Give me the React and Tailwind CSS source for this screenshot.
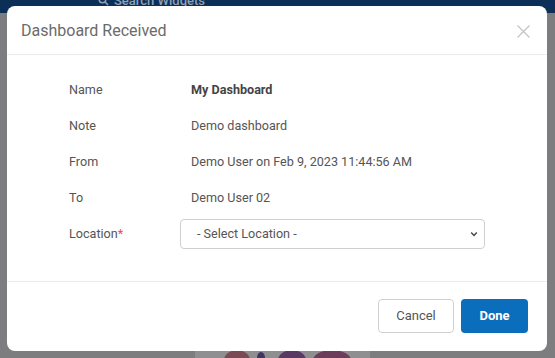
import React from "react";

export default function App() {
  const rows = [
    ["Name", "My Dashboard", true],
    ["Note", "Demo dashboard", false],
    ["From", "Demo User on Feb 9, 2023 11:44:56 AM", false],
    ["To", "Demo User 02", false],
  ];
  return (
    <div
      className="relative w-[555px] h-[358px] overflow-hidden bg-[#7d7d7f] flex flex-col"
      style={{ fontFamily: "Roboto, 'Liberation Sans', sans-serif" }}
    >
      {/* page behind the overlay */}
      <div className="h-[13px] bg-[#0c2f57] flex items-end pl-[98px] shrink-0">
        <div className="flex items-center gap-[5px] translate-y-[-6px] text-[#8fa1b6]">
          <svg width="11" height="11" viewBox="0 0 11 11">
            <circle cx="4.5" cy="4.5" r="3.3" fill="none" stroke="#8fa1b6" strokeWidth="1.5" />
            <path d="M7 7 L10 10" stroke="#8fa1b6" strokeWidth="1.6" />
          </svg>
          <span className="text-[13px] leading-none font-medium">Search Widgets</span>
        </div>
      </div>
      <div className="flex-1 flex items-end justify-center">
        <svg width="175" height="10" viewBox="0 0 175 10" className="mr-[-10px]">
          <rect x="0" y="0" width="175" height="10" fill="#8f8f91" />
          <ellipse cx="42" cy="12" rx="13" ry="10" fill="#7a4a55" />
          <ellipse cx="66" cy="10" rx="4" ry="6" fill="#3f3560" />
          <ellipse cx="97" cy="12" rx="14" ry="10" fill="#5a3a63" />
          <ellipse cx="137" cy="12" rx="19" ry="10" fill="#6c3d5a" />
        </svg>
      </div>

      {/* modal */}
      <div className="absolute left-[7px] top-[6px] w-[540px] h-[345px] bg-white rounded-[8px] flex flex-col">
        <div className="h-[49px] border-b border-[#ececec] flex items-center justify-between pl-[14px] pr-[17px] pt-[1px]">
          <span className="text-[16px] text-[#6b6b6b]">Dashboard Received</span>
          <svg width="13" height="13" viewBox="0 0 13 13" className="mt-[2px]">
            <path d="M0.5 0.5 L12.5 12.5 M12.5 0.5 L0.5 12.5" stroke="#c4c4c4" strokeWidth="1.3" />
          </svg>
        </div>
        <div className="flex-1 pl-[62px] pr-[62px] pt-[17px]">
          {rows.map(([k, v, b]) => (
            <div key={k} className="flex h-[36px] items-center text-[12.6px]">
              <div className="w-[122px] text-[#555]">{k}</div>
              <div className={b ? "font-bold text-[#444]" : "text-[#555]"}>{v}</div>
            </div>
          ))}
          <div className="flex h-[37px] items-center text-[12.6px]">
            <div className="w-[111px] text-[#555]">
              Location<span className="text-[#d9534f]">*</span>
            </div>
            <div className="flex-1 h-[30px] -mt-[1px] border border-[#cfcfcf] rounded-[4px] flex items-center justify-between pl-[16px] pr-[5px] text-[#555]">
              <span>- Select Location -</span>
              <svg width="10" height="10" viewBox="0 0 10 10">
                <path d="M2.2 3.6 L5 6.4 L7.8 3.6" fill="none" stroke="#444" strokeWidth="1.4" />
              </svg>
            </div>
          </div>
        </div>
        <div className="h-[70px] border-t border-[#ececec] flex items-center justify-end gap-[7px] pr-[19px] pb-[2px]">
          <button className="w-[76px] h-[34px] border border-[#d0d0d0] rounded-[4px] text-[13px] text-[#555] bg-white">
            Cancel
          </button>
          <button className="w-[67px] h-[34px] rounded-[4px] text-[13px] font-bold text-white bg-[#0a6ebd]">
            Done
          </button>
        </div>
      </div>
    </div>
  );
}
